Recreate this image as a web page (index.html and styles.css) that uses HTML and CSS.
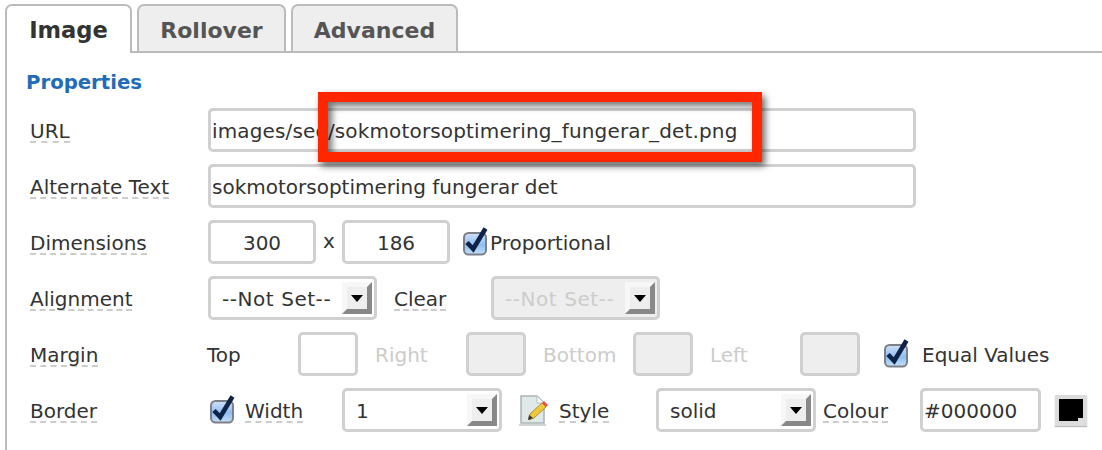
FILE: index.html
```html
<!DOCTYPE html>
<html lang="en">
<head>
<meta charset="utf-8">
<title>Image properties</title>
<link rel="stylesheet" href="styles.css">
</head>
<body>
<div class="dialog">
  <div class="tabs">
    <div class="tab tab-image active">Image</div>
    <div class="tab tab-rollover">Rollover</div>
    <div class="tab tab-advanced">Advanced</div>
  </div>
  <div class="panel">
    <h2 class="heading">Properties</h2>
    <div class="row">
      <div class="label-cell"><span class="lbl">URL</span></div>
      <div class="input w-full url">images/seo/sokmotorsoptimering_fungerar_det.png</div>
    </div>
    <div class="row">
      <div class="label-cell"><span class="lbl">Alternate Text</span></div>
      <div class="input w-full">sokmotorsoptimering fungerar det</div>
    </div>
    <div class="row">
      <div class="label-cell"><span class="lbl">Dimensions</span></div>
      <div class="input center w-dim">300</div>
      <span class="times">x</span>
      <div class="input center w-dim">186</div>
      <svg class="check ml-13" viewBox="0 0 26 29"><use href="#check"/></svg>
      <span class="plain ml-4">Proportional</span>
    </div>
    <div class="row">
      <div class="label-cell"><span class="lbl">Alignment</span></div>
      <div class="select w-align"><span class="sel-text wide">--Not Set--</span><span class="arrow"></span></div>
      <div class="clear-cell"><span class="lbl">Clear</span></div>
      <div class="select w-align disabled"><span class="sel-text wide">--Not Set--</span><span class="arrow"></span></div>
    </div>
    <div class="row">
      <div class="label-cell"><span class="lbl">Margin</span></div>
      <span class="plain w-top">Top</span>
      <div class="input w-m"></div>
      <span class="plain muted w-right">Right</span>
      <div class="input w-m disabled"></div>
      <span class="plain muted w-bottom">Bottom</span>
      <div class="input w-m disabled"></div>
      <span class="plain muted w-left">Left</span>
      <div class="input w-m disabled"></div>
      <svg class="check ml-23" viewBox="0 0 26 29"><use href="#check"/></svg>
      <span class="plain ml-12">Equal Values</span>
    </div>
    <div class="row">
      <div class="label-cell"><span class="lbl">Border</span></div>
      <svg class="check ml-2" viewBox="0 0 26 29"><use href="#check"/></svg>
      <div class="width-cell"><span class="lbl">Width</span></div>
      <div class="select w-b1"><span class="sel-text">1</span><span class="arrow"></span></div>
      <svg class="edit" viewBox="0 0 32 32">
        <path d="M3 2h16l7 7v20H3z" fill="#dfe9ea" stroke="#a9b4b4" stroke-width="1.5"/>
        <path d="M19 2v7h7z" fill="#fff" stroke="#b5bdbd"/>
        <path d="M1 31h27" stroke="#d0d4d4" stroke-width="2"/>
        <path d="M12 20 24 9l4 4-12 11-5 2z" fill="#f0c93a" stroke="#a98f2a"/>
        <path d="M24 9l2-2 4 4-2 2z" fill="#e8504a"/>
        <path d="M11 21l-1 5 5-2z" fill="#333"/>
      </svg>
      <div class="style-cell"><span class="lbl">Style</span></div>
      <div class="select w-b2"><span class="sel-text">solid</span><span class="arrow"></span></div>
      <div class="colour-cell"><span class="lbl">Colour</span></div>
      <div class="input w-colinput">#000000</div>
      <div class="swatch"><span class="swatch-mark"></span></div>
    </div>
  </div>
  <div class="callout"></div>
</div>
<svg class="defs" width="0" height="0">
  <defs>
    <linearGradient id="boxfill" x1="0" y1="0" x2="0" y2="1">
      <stop offset="0" stop-color="#cfe2f8"/>
      <stop offset="0.55" stop-color="#8fbdf0"/>
      <stop offset="1" stop-color="#c4e0fb"/>
    </linearGradient>
    <g id="check">
      <rect x="2" y="6" width="22" height="21.5" rx="4.5" fill="url(#boxfill)" stroke="#7d8088" stroke-width="2"/>
      <path d="M5 15.5 11.2 22 23.5 1.5" fill="none" stroke="#0e2347" stroke-width="4.6"/>
    </g>
  </defs>
</svg>
</body>
</html>
```
FILE: styles.css
```css
* { box-sizing: border-box; }
html, body { margin: 0; padding: 0; background: #fff; overflow: hidden; }
body { font-family: "DejaVu Sans", Verdana, sans-serif; font-size: 20px; color: #333; }
.dialog { position: relative; width: 1102px; height: 450px; padding: 4px 0 0 5px; overflow: hidden; }
.defs { position: absolute; }

.tabs { display: flex; height: 49px; align-items: flex-start; border-bottom: 2px solid #bbb; }
.tab { border: 2px solid #bbb; border-bottom: 0; border-radius: 7px 7px 0 0; background: #eee; color: #555; font-weight: 700; font-size: 22px; line-height: 49px; text-align: center; margin-right: 5px; height: 47px; }
.tab.active { background: #fff; color: #333; height: 49px; font-size: 22.6px; position: relative; }
.tab-image { width: 127px; }
.tab-rollover { width: 149px; }
.tab-advanced { width: 167px; margin-right: 0; }

.panel { border-left: 2px solid #bbb; padding: 0 0 0 23px; height: 400px; }
.heading { margin: 0 0 0 -4px; height: 55px; padding-top: 16px; font-size: 19.7px; line-height: 28px; font-weight: 700; color: #1f6cb9; }
.row { display: flex; align-items: center; height: 44px; margin-bottom: 12px; }
.label-cell { width: 178px; flex: none; }
.clear-cell { width: 114px; flex: none; padding-left: 17px; }
.width-cell { width: 107px; flex: none; padding-left: 10px; }
.style-cell { width: 106px; flex: none; padding-left: 9px; }
.colour-cell { width: 104px; flex: none; padding-left: 7px; }
.lbl { display: inline-block; padding-top: 5px; margin-bottom: 2px; line-height: 20px; border-bottom: 2px dashed #ccc; white-space: nowrap; vertical-align: top; }
.plain { white-space: nowrap; padding-top: 2px; }
.muted { color: #ccc; }

.input { height: 44px; border: 3px solid #d0d0d0; border-radius: 5px; background: #fff; line-height: 40px; padding: 0 0 0 1px; white-space: nowrap; overflow: hidden; flex: none; }
.url { letter-spacing: .15px; }
.input.center { text-align: center; padding: 0; }
.input.disabled, .select.disabled { background: #eee; }
.w-full { width: 708px; }
.w-dim { width: 108px; }
.times { width: 26px; text-align: center; flex: none; padding-bottom: 3px; }
.w-m { width: 60px; }
.w-top { width: 91px; margin-left: -1px; }
.w-right { width: 108px; padding-left: 17px; }
.w-bottom { width: 107px; padding-left: 17px; }
.w-left { width: 107px; padding-left: 17px; }
.w-colinput { width: 121px; }

.select { height: 44px; border: 3px solid #d0d0d0; border-radius: 5px; background: #fff; display: flex; align-items: center; justify-content: space-between; flex: none; padding: 0 2px 0 11px; }
.select.disabled .sel-text { color: #ccc; }
.sel-text { white-space: nowrap; padding-top: 1px; }
.sel-text.wide { letter-spacing: .55px; }
.w-align { width: 169px; }
.w-b1 { width: 160px; }
.w-b2 { width: 160px; }

.arrow { position: relative; width: 30px; height: 32px; flex: none; border: 5px solid; border-color: #f7f7f7 #888 #888 #f7f7f7; background: #eee; }
.arrow::after { content: ""; position: absolute; left: 4px; top: 8px; border: 6px solid transparent; border-top: 7px solid #000; border-bottom: 0; }

.check { width: 26px; height: 29px; flex: none; margin-top: -1px; }
.edit { width: 32px; height: 32px; flex: none; margin-left: 16px; }
.ml-2 { margin-left: 1px; }
.ml-4 { margin-left: 2px; }
.ml-12 { margin-left: 13px; }
.ml-13 { margin-left: 12px; }
.ml-23 { margin-left: 23px; }

.swatch { position: relative; width: 32px; height: 31px; margin-left: 14px; border: 4px solid #dcdcdc; border-bottom-width: 5px; background: #000; flex: none; box-shadow: 0 1px 1px #bbb; }
.swatch-mark { position: absolute; right: -2px; bottom: -3px; width: 7px; height: 6px; background: #ddd; }

.callout { position: absolute; left: 318px; top: 92px; width: 444px; height: 70px; border: 10px solid #ff2600; box-shadow: 3px 4px 7px rgba(0,0,0,.6), inset 4px 4px 7px rgba(0,0,0,.55); }
```
